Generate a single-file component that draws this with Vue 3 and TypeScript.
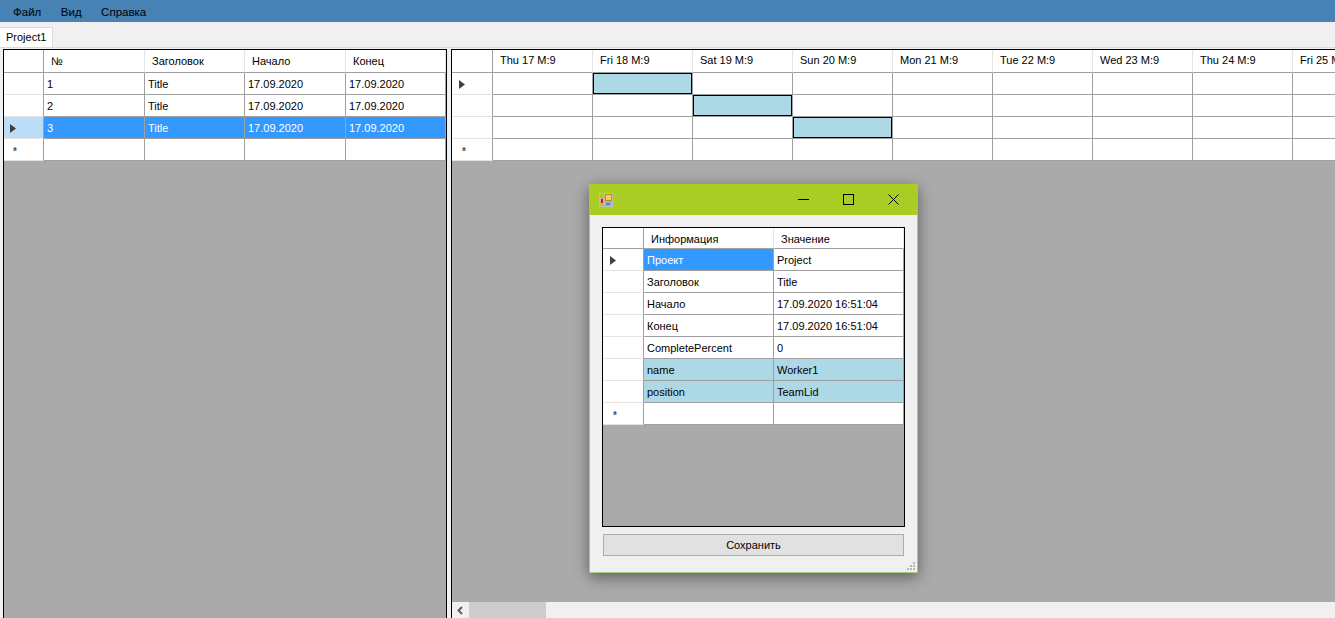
<template>
  <div class="app">
    <nav class="menu">
      <span v-for="m in menu" :key="m" class="menu-item">{{ m }}</span>
    </nav>
    <div class="tabs">
      <div class="tab">Project1</div>
    </div>

    <main class="panels">
      <section class="grid task-grid">
        <div class="row head">
          <div class="corner"></div>
          <div v-for="c in taskCols" :key="c" class="col-head">{{ c }}</div>
        </div>
        <div v-for="t in tasks" :key="t.id" class="row" :class="{ selected: t.id === 3 }">
          <div class="row-head">
            <svg v-if="t.id === 3" class="arrow" width="6" height="9" viewBox="0 0 6 9"><path d="M0 0L6 4.5L0 9Z" /></svg>
          </div>
          <div class="cell">{{ t.id }}</div>
          <div class="cell">{{ t.title }}</div>
          <div class="cell">{{ t.start }}</div>
          <div class="cell">{{ t.end }}</div>
        </div>
        <div class="row">
          <div class="row-head"><span class="star">*</span></div>
          <div v-for="n in 4" :key="n" class="cell"></div>
        </div>
      </section>

      <section class="gantt-wrap">
        <div class="grid gantt-grid">
          <div class="row head">
            <div class="corner"></div>
            <div v-for="d in days" :key="d" class="col-head">{{ d }}</div>
          </div>
          <div v-for="r in 3" :key="r" class="row">
            <div class="row-head">
              <svg v-if="r === 1" class="arrow" width="6" height="9" viewBox="0 0 6 9"><path d="M0 0L6 4.5L0 9Z" /></svg>
            </div>
            <div v-for="(d, i) in days" :key="d" class="cell">
              <div v-if="i === r" class="bar"></div>
            </div>
          </div>
          <div class="row">
            <div class="row-head"><span class="star">*</span></div>
            <div v-for="d in days" :key="d" class="cell"></div>
          </div>
        </div>
        <div class="scrollbar">
          <svg class="scroll-left" width="6" height="9" viewBox="0 0 6 9"><path d="M5 1L1.5 4.5L5 8" /></svg>
          <div class="thumb"></div>
        </div>
      </section>
    </main>

    <!-- task details window -->
    <div class="window">
      <header class="title-bar">
        <svg class="app-icon" width="14" height="14" viewBox="0 0 14 14">
          <rect x="0.5" y="0.5" width="13" height="13" fill="none" stroke="#bfc2a8" />
          <path d="M0 10.5H14M5.5 0V14" stroke="#bfc2a8" fill="none" />
          <rect x="1.5" y="5.5" width="3" height="5" fill="#d8141c" stroke="#f0a0a0" />
          <rect x="6.5" y="1.5" width="6" height="6" fill="#f8d050" stroke="#b88a20" />
          <rect x="6.5" y="9.5" width="5" height="3" fill="#4f86e0" stroke="#8fb0e4" />
        </svg>
        <svg class="win-btn min" width="11" height="11" viewBox="0 0 11 11"><path d="M0 5.5H11" /></svg>
        <svg class="win-btn max" width="11" height="11" viewBox="0 0 11 11"><rect x="0.5" y="0.5" width="10" height="10" /></svg>
        <svg class="win-btn close" width="11" height="11" viewBox="0 0 11 11"><path d="M0.5 0.5L10.5 10.5M10.5 0.5L0.5 10.5" /></svg>
      </header>
      <div class="window-body">
        <section class="grid info-grid">
          <div class="row head">
            <div class="corner"></div>
            <div class="col-head">Информация</div>
            <div class="col-head">Значение</div>
          </div>
          <div v-for="(p, i) in props" :key="p.key" class="row" :class="{ worker: p.worker }">
            <div class="row-head">
              <svg v-if="i === 0" class="arrow" width="6" height="9" viewBox="0 0 6 9"><path d="M0 0L6 4.5L0 9Z" /></svg>
            </div>
            <div class="cell" :class="{ active: i === 0 }">{{ p.key }}</div>
            <div class="cell">{{ p.value }}</div>
          </div>
          <div class="row">
            <div class="row-head"><span class="star">*</span></div>
            <div class="cell"></div>
            <div class="cell"></div>
          </div>
        </section>
        <button class="save" type="button">Сохранить</button>
      </div>
      <svg class="grip" width="10" height="10" viewBox="0 0 10 10">
        <path d="M7 1h2v2H7zM4 4h2v2H4zM7 4h2v2H7zM1 7h2v2H1zM4 7h2v2H4zM7 7h2v2H7z" />
      </svg>
    </div>
  </div>
</template>

<script setup lang="ts">
interface Task {
  id: number;
  title: string;
  start: string;
  end: string;
}

interface Prop {
  key: string;
  value: string;
  worker?: boolean;
}

const menu = ['Файл', 'Вид', 'Справка'];
const taskCols = ['№', 'Заголовок', 'Начало', 'Конец'];

const tasks: Task[] = [
  { id: 1, title: 'Title', start: '17.09.2020', end: '17.09.2020' },
  { id: 2, title: 'Title', start: '17.09.2020', end: '17.09.2020' },
  { id: 3, title: 'Title', start: '17.09.2020', end: '17.09.2020' },
];

const days = [
  'Thu 17 M:9',
  'Fri 18 M:9',
  'Sat 19 M:9',
  'Sun 20 M:9',
  'Mon 21 M:9',
  'Tue 22 M:9',
  'Wed 23 M:9',
  'Thu 24 M:9',
  'Fri 25 M:9',
];

const props: Prop[] = [
  { key: 'Проект', value: 'Project' },
  { key: 'Заголовок', value: 'Title' },
  { key: 'Начало', value: '17.09.2020 16:51:04' },
  { key: 'Конец', value: '17.09.2020 16:51:04' },
  { key: 'CompletePercent', value: '0' },
  { key: 'name', value: 'Worker1', worker: true },
  { key: 'position', value: 'TeamLid', worker: true },
];
</script>

<style>
html,
body {
  margin: 0;
  height: 100%;
  overflow: hidden;
}
</style>

<style scoped>
.app {
  position: relative;
  width: 1335px;
  height: 618px;
  display: flex;
  flex-direction: column;
  background: #f0f0f0;
  font-family: "Liberation Sans", Arial, sans-serif;
  font-size: 11px;
  color: #000;
  overflow: hidden;
}

.menu {
  height: 22px;
  flex: none;
  box-sizing: border-box;
  display: flex;
  align-items: center;
  padding: 2px 0 0 13px;
  gap: 19.5px;
  background: #4682b4;
  font-size: 11.5px;
}

.tabs {
  height: 26px;
  flex: none;
  box-sizing: border-box;
  padding-top: 5px;
  border-bottom: 1px solid #dcdcdc;
}

.tab {
  width: 53px;
  height: 20px;
  box-sizing: border-box;
  padding-left: 6px;
  line-height: 19px;
  background: #fff;
  border-top: 1px solid #dcdcdc;
  border-right: 1px solid #dcdcdc;
}

.panels {
  flex: 1;
  min-height: 0;
  display: flex;
  gap: 4px;
  padding: 1px 0 0 3px;
}

.grid {
  box-sizing: border-box;
  border: 1px solid #000;
  background: #aaaaaa;
  overflow: hidden;
}

.task-grid {
  width: 444px;
  flex: none;
  border-bottom: 0;
}

.task-grid .col-head {
  padding-top: 5px;
}

.gantt-wrap {
  flex: 1;
  min-width: 0;
  display: flex;
  flex-direction: column;
  border-left: 1px solid #000;
}

.gantt-grid {
  flex: 1;
  border-left: 0;
  border-right: 0;
  border-bottom: 0;
}

.row {
  display: grid;
  height: 22px;
}

.row.head {
  height: 23px;
}

.task-grid .row {
  grid-template-columns: 40px 101px 100px 101px 100px;
}

.gantt-grid .row {
  width: 941px;
  grid-template-columns: 41px repeat(9, 100px);
}

.info-grid .row {
  grid-template-columns: 41px 130px 130px;
}

.info-grid .row.head {
  height: 21px;
}

.info-grid .col-head {
  padding-top: 5px;
}

.corner,
.col-head,
.row-head,
.cell {
  box-sizing: border-box;
  background: #fff;
  white-space: nowrap;
  overflow: hidden;
}

.corner {
  border-right: 1px solid #a0a0a0;
  border-bottom: 1px solid #a0a0a0;
}

.col-head {
  padding: 4px 0 0 7px;
  border-right: 1px solid #e6e6e6;
  border-bottom: 1px solid #a0a0a0;
}

.row-head {
  display: flex;
  align-items: center;
  padding-left: 7px;
  border-right: 1px solid #a0a0a0;
  border-bottom: 1px solid #e4e4e4;
}

.task-grid .row-head {
  padding-left: 6px;
}

.cell {
  position: relative;
  padding: 1px 0 0 3px;
  line-height: 21px;
  border-right: 1px solid #a0a0a0;
  border-bottom: 1px solid #a0a0a0;
}

.arrow {
  margin-top: 2px;
  fill: #404040;
}

.star {
  font-size: 10px;
  font-weight: bold;
  line-height: 1;
  color: #505050;
  padding: 4px 0 0 3px;
}

.selected .row-head {
  background: #bddcf5;
}

.selected .cell,
.cell.active {
  background: #3399ff;
  color: #fff;
}

.worker .cell {
  background: #add8e6;
}

.bar {
  position: absolute;
  inset: 0;
  box-sizing: border-box;
  background: #add8e6;
  border: 1px solid #000;
}

.scrollbar {
  height: 16px;
  flex: none;
  display: flex;
  align-items: center;
  background: #f0f0f0;
}

.scroll-left {
  margin-left: 5px;
  fill: none;
  stroke: #606060;
  stroke-width: 2;
}

.thumb {
  width: 77px;
  height: 16px;
  margin-left: 6px;
  background: #cdcdcd;
}

.window {
  position: absolute;
  left: 589px;
  top: 184px;
  width: 329px;
  height: 389px;
  box-sizing: border-box;
  display: flex;
  flex-direction: column;
  background: #f0f0f0;
  border: 1px solid #a9c97c;
  border-top: 0;
  box-shadow: 0 4px 14px rgba(0, 0, 0, 0.45);
}

.title-bar {
  height: 31px;
  flex: none;
  display: flex;
  align-items: center;
  margin: 0 -1px;
  background: #aacd26;
}

.app-icon {
  margin-left: 10px;
}

.win-btn {
  flex: none;
  fill: none;
  stroke: #000;
  stroke-width: 1;
  shape-rendering: crispEdges;
}

.min {
  margin-left: 185px;
}

.max {
  margin-left: 34px;
}

.close {
  margin-left: 34px;
  shape-rendering: auto;
}

.window-body {
  flex: 1;
  min-height: 0;
  display: flex;
  flex-direction: column;
  padding: 12px 13px 17px 12px;
}

.info-grid {
  height: 300px;
  flex: none;
  width: 303px;
}

.save {
  height: 22px;
  width: 301px;
  flex: none;
  margin: 7px 0 0 1px;
  padding: 0;
  box-sizing: border-box;
  background: #e1e1e1;
  border: 1px solid #adadad;
  font-family: inherit;
  font-size: 11px;
  color: #000;
}

.grip {
  position: absolute;
  right: 1px;
  bottom: 1px;
  fill: #b8b8b8;
}
</style>
